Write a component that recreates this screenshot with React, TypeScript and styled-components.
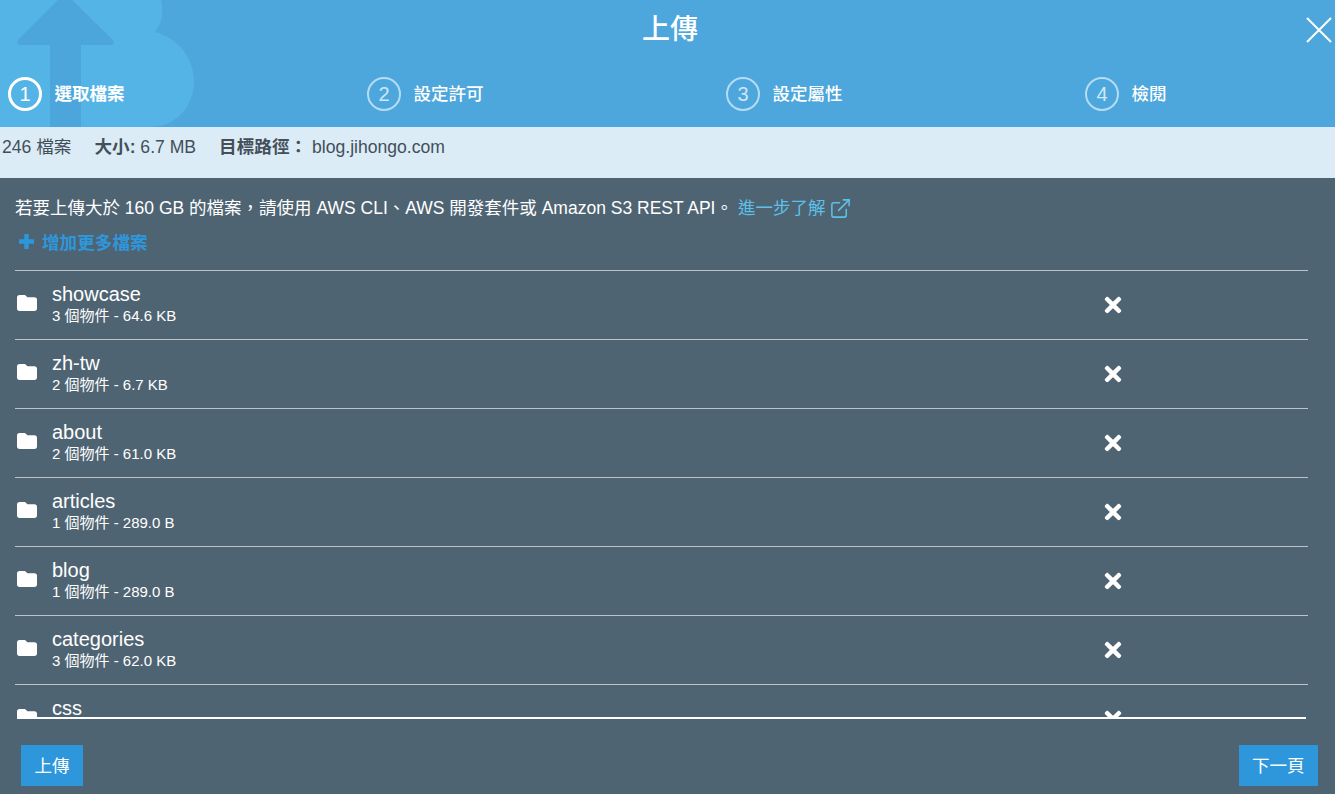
import styled, {createGlobalStyle} from 'styled-components'
import {FaTimes} from 'react-icons/fa'
import {ExternalLink} from 'lucide-react'

const GlobalStyle = createGlobalStyle`
  html, body {
    margin: 0;
    height: 100%;
    background: #4f6473;
  }
  body {
    font-family: "Liberation Sans", "Noto Sans CJK TC", sans-serif;
    overflow: hidden;
  }
`

const Page = styled.div`
  width: 1335px;
  height: 794px;
  display: flex;
  flex-direction: column;
  overflow: hidden;
  background: #4f6473;
  color: #fff;
`

const Header = styled.header`
  position: relative;
  height: 127px;
  flex: none;
  background: #4da7dc;
  overflow: hidden;
`

const Watermark = styled.svg`
  position: absolute;
  left: 0;
  top: 0;
`

const Title = styled.h1`
  position: relative;
  box-sizing: border-box;
  margin: 0;
  padding: 2px 0 0 5px;
  height: 56px;
  font-size: 28px;
  font-weight: 500;
  line-height: 55px;
  text-align: center;
`

const CloseButton = styled.button`
  position: absolute;
  top: 16px;
  right: 2px;
  width: 28px;
  height: 28px;
  padding: 0;
  border: none;
  background: none;
  cursor: pointer;
`

const Steps = styled.ol`
  position: relative;
  margin: 0;
  padding: 21px 0 0 8px;
  list-style: none;
  display: grid;
  grid-template-columns: 359px 359px 359px 1fr;
`

const Step = styled.li`
  display: flex;
  align-items: center;
  gap: 12.5px;
`

const StepNumber = styled.span<{$active?: boolean}>`
  box-sizing: border-box;
  width: 34px;
  height: 34px;
  border-radius: 50%;
  border: ${(p) => (p.$active ? '3px solid #fff' : '2px solid #b5dcf3')};
  color: ${(p) => (p.$active ? '#fff' : '#cfe8f7')};
  font-size: 20px;
  line-height: ${(p) => (p.$active ? '29px' : '31px')};
  text-align: center;
`

const StepLabel = styled.span<{$active?: boolean}>`
  font-size: 17.5px;
  font-weight: ${(p) => (p.$active ? 700 : 500)};
  line-height: 24px;
`

const InfoBar = styled.div`
  height: 51px;
  flex: none;
  box-sizing: border-box;
  padding: 8px 0 0 2px;
  display: flex;
  gap: 23px;
  background: #dbecf7;
  color: #444f5a;
  font-size: 17.6px;
  line-height: 25px;
`

const InfoItem = styled.span`
  white-space: pre;
`

const InfoLabel = styled.b`
  font-weight: 700;
`

const Body = styled.main`
  flex: 1;
  min-height: 0;
  padding: 19px 27px 0 15px;
  display: flex;
  flex-direction: column;
`

const Notice = styled.p`
  margin: 0;
  font-size: 17.5px;
  line-height: 23px;
  white-space: pre;
`

const LearnMore = styled.a`
  display: inline-flex;
  align-items: center;
  gap: 4px;
  margin-left: 5px;
  color: #5cc0ea;
  vertical-align: top;
`

const AddMore = styled.button`
  align-self: flex-start;
  display: flex;
  align-items: center;
  gap: 8px;
  height: 24px;
  margin: 9px 0 17px 4px;
  padding: 0;
  border: none;
  background: none;
  color: #2e97dc;
  font: inherit;
  font-size: 17.6px;
  font-weight: 700;
  cursor: pointer;
`

const ListFrame = styled.div`
  position: relative;
  height: 449px;
  flex: none;
`

const List = styled.ul`
  height: 100%;
  margin: 0;
  padding: 0;
  list-style: none;
  overflow: hidden;
  border-top: 1px solid #b9c4cb;
  box-sizing: border-box;
`

const ScrollEdge = styled.div`
  position: absolute;
  left: 19px;
  bottom: 0;
  width: 1272px;
  height: 2px;
  background: #fff;
`

const Row = styled.li`
  box-sizing: border-box;
  height: 69px;
  display: flex;
  align-items: center;
  padding-bottom: 1px;
  border-bottom: 1px solid #b9c4cb;
`

const FolderSvg = styled.svg`
  flex: none;
  margin: -4px 15px 0 2px;
`

const RowText = styled.div`
  width: 1049px;
  flex: none;
  margin-top: -2px;
`

const RowName = styled.div`
  font-size: 20px;
  line-height: 24px;
`

const RowMeta = styled.div`
  height: 20px;
  font-size: 15px;
  line-height: 20px;
`

const RemoveButton = styled.button`
  display: flex;
  padding: 0;
  border: none;
  background: none;
  color: #fff;
  cursor: pointer;
`

const Footer = styled.footer`
  flex: 1;
  display: flex;
  align-items: flex-start;
  justify-content: space-between;
  margin: 0 -27px 0 -15px;
  padding: 26px 17px 0 21px;
`

const ActionButton = styled.button`
  box-sizing: border-box;
  height: 41px;
  padding: 0 13.5px 3px;
  border: none;
  background: #2e97dc;
  color: #fff;
  font: inherit;
  font-size: 17.5px;
  cursor: pointer;
`

const steps = ['選取檔案', '設定許可', '設定屬性', '檢閱']

const folders = [
  {name: 'showcase', meta: '3 個物件 - 64.6 KB'},
  {name: 'zh-tw', meta: '2 個物件 - 6.7 KB'},
  {name: 'about', meta: '2 個物件 - 61.0 KB'},
  {name: 'articles', meta: '1 個物件 - 289.0 B'},
  {name: 'blog', meta: '1 個物件 - 289.0 B'},
  {name: 'categories', meta: '3 個物件 - 62.0 KB'},
  {name: 'css', meta: ''},
]

function FolderIcon() {
  return (
    <FolderSvg width="20" height="16" viewBox="0 0 20 16" fill="#fff">
      <path d="M2.5 0H7C8.2 0 8.8 .6 9.6 1.4L10.4 2.2H17.5C19 2.2 20 3.2 20 4.6V13.5C20 15 19 16 17.5 16H2.5C1 16 0 15 0 13.5V2.5C0 1 1 0 2.5 0Z" />
    </FolderSvg>
  )
}

function PlusIcon() {
  return (
    <svg width="15" height="15" viewBox="0 0 15 15" fill="none" stroke="currentColor" strokeWidth="4.4">
      <path d="M7.5 0V15M0 7.5H15" />
    </svg>
  )
}

export default function App() {
  return (
    <Page>
      <GlobalStyle />
      <Header>
        <Watermark width="200" height="127" viewBox="0 0 200 127">
          <path
            d="M0 0H161C164 12 162 24 155 32C178 38 194 58 194 82C194 106 176 127 150 127H0Z"
            fill="#55b4e6"
          />
          <path
            d="M65 -7L113 40Q115 45 111 45H81V127H50V45H20Q16 45 18 40Z"
            fill="#4ca6dc"
          />
        </Watermark>
        <Title>上傳</Title>
        <CloseButton type="button" aria-label="關閉">
          <svg width="28" height="28" viewBox="0 0 28 28" fill="none" stroke="#fff" strokeWidth="2">
            <path d="M2 2L26 26M26 2L2 26" />
          </svg>
        </CloseButton>
        <Steps>
          {steps.map((label, i) => (
            <Step key={label}>
              <StepNumber $active={i === 0}>{i + 1}</StepNumber>
              <StepLabel $active={i === 0}>{label}</StepLabel>
            </Step>
          ))}
        </Steps>
      </Header>
      <InfoBar>
        <InfoItem>246 檔案</InfoItem>
        <InfoItem>
          <InfoLabel>大小:</InfoLabel> 6.7 MB
        </InfoItem>
        <InfoItem>
          <InfoLabel>目標路徑：</InfoLabel> blog.jihongo.com
        </InfoItem>
      </InfoBar>
      <Body>
        <Notice>
          若要上傳大於 160 GB 的檔案，請使用 AWS CLI、AWS 開發套件或 Amazon S3 REST API。
          <LearnMore>
            進一步了解
            <ExternalLink size={23} strokeWidth={1.6} />
          </LearnMore>
        </Notice>
        <AddMore type="button">
          <PlusIcon />
          增加更多檔案
        </AddMore>
        <ListFrame>
          <List>
            {folders.map((f) => (
              <Row key={f.name}>
                <FolderIcon />
                <RowText>
                  <RowName>{f.name}</RowName>
                  <RowMeta>{f.meta}</RowMeta>
                </RowText>
                <RemoveButton type="button" aria-label={`移除 ${f.name}`}>
                  <FaTimes size={24} />
                </RemoveButton>
              </Row>
            ))}
          </List>
          <ScrollEdge />
        </ListFrame>
        <Footer>
          <ActionButton type="button">上傳</ActionButton>
          <ActionButton type="button">下一頁</ActionButton>
        </Footer>
      </Body>
    </Page>
  )
}
